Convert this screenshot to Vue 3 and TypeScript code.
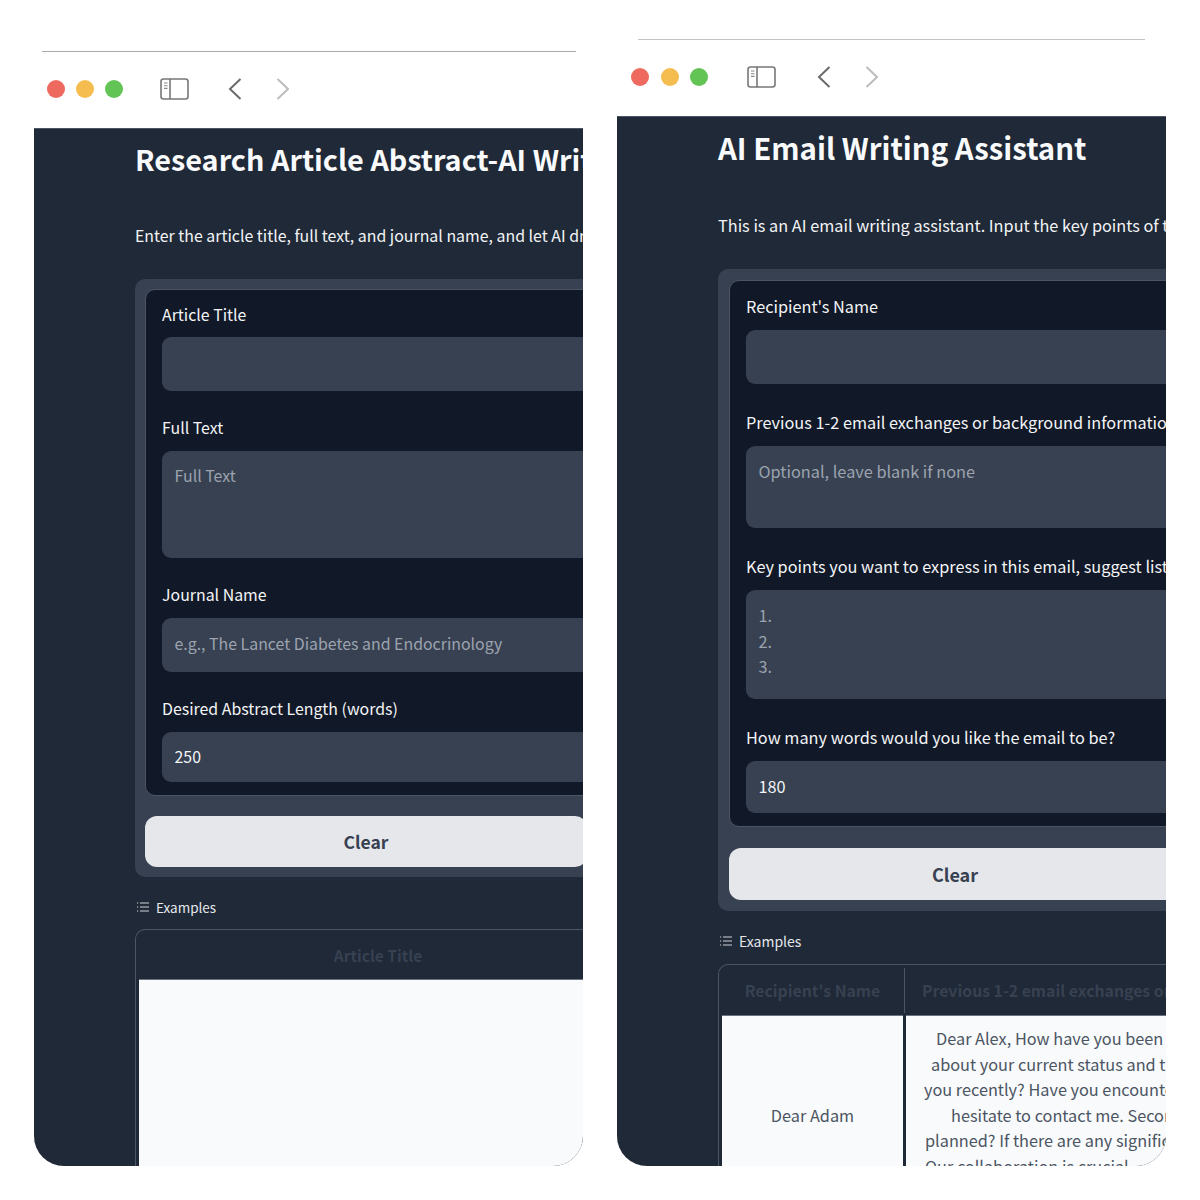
<script setup lang="ts">
interface Field {
  label: string;
  value?: string;
  placeholder?: string;
  multiline?: boolean;
  size: string;
}

interface Line {
  text: string;
  indent: number;
}

const articleFields: Field[] = [
  { label: "Article Title", size: "h-54" },
  { label: "Full Text", placeholder: "Full Text", multiline: true, size: "h-107" },
  { label: "Journal Name", placeholder: "e.g., The Lancet Diabetes and Endocrinology", size: "h-54" },
  { label: "Desired Abstract Length (words)", value: "250", size: "h-50" },
];

const emailFields: Field[] = [
  { label: "Recipient's Name", size: "h-54" },
  {
    label: "Previous 1-2 email exchanges or background information",
    placeholder: "Optional, leave blank if none",
    multiline: true,
    size: "h-82",
  },
  {
    label: "Key points you want to express in this email, suggest listing them",
    placeholder: "1.\n2.\n3.",
    multiline: true,
    size: "h-109",
  },
  { label: "How many words would you like the email to be?", value: "180", size: "h-52" },
];

const emailLines: Line[] = [
  { text: "Dear Alex, How have you been recently?", indent: 30 },
  { text: "about your current status and the project", indent: 25 },
  { text: "you recently? Have you encountered any", indent: 18 },
  { text: "hesitate to contact me. Secondly, what", indent: 45 },
  { text: "planned? If there are any significant", indent: 19 },
  { text: "Our collaboration is crucial", indent: 19 },
];
</script>

<template>
  <div class="page">
    <section class="window window-a">
      <div class="chrome">
        <div class="rule"></div>
        <div class="controls">
          <span class="dot red"></span>
          <span class="dot amber"></span>
          <span class="dot green"></span>
          <svg class="sidebar-icon" viewBox="0 0 29 22" fill="none">
            <rect x="1" y="1" width="27" height="20" rx="2.5" stroke="#777" stroke-width="1.6" />
            <path d="M10 1v20" stroke="#777" stroke-width="1.6" />
            <path d="M4 5h3.5M4 7.7h3.5M4 10.4h3.5" stroke="#888" stroke-width="1.1" />
          </svg>
          <svg class="chevron" viewBox="0 0 14 22" fill="none">
            <path d="M12.5 1 2 11l10.5 10" stroke="#6b6b6b" stroke-width="2" />
          </svg>
          <svg class="chevron next" viewBox="0 0 14 22" fill="none">
            <path d="m2.5 1 10.5 10-10.5 10" stroke="#bdbdbd" stroke-width="2" />
          </svg>
        </div>
      </div>
      <div class="screen">
        <h1>Research Article Abstract-AI Writer</h1>
        <p class="intro">Enter the article title, full text, and journal name, and let AI draft the abstract for you.</p>
        <div class="panel">
          <div class="form-box">
            <div v-for="field in articleFields" :key="field.label" class="field">
              <label>{{ field.label }}</label>
              <textarea v-if="field.multiline" :class="field.size" :placeholder="field.placeholder"></textarea>
              <input v-else :class="field.size" type="text" :value="field.value" :placeholder="field.placeholder" />
            </div>
          </div>
          <button type="button" class="clear">Clear</button>
        </div>
        <div class="examples-label">
          <svg viewBox="0 0 12 12" fill="none" stroke="#e5e7eb" stroke-width="0.9">
            <path d="M3 2h9M3 6h9M3 10h9" />
            <path d="M0 2h1.2M0 6h1.2M0 10h1.2" />
          </svg>
          <span>Examples</span>
        </div>
        <div class="table">
          <div class="col col-wide">
            <div class="th">Article Title</div>
            <div class="td"></div>
          </div>
        </div>
      </div>
    </section>

    <section class="window window-b">
      <div class="chrome">
        <div class="rule"></div>
        <div class="controls">
          <span class="dot red"></span>
          <span class="dot amber"></span>
          <span class="dot green"></span>
          <svg class="sidebar-icon" viewBox="0 0 29 22" fill="none">
            <rect x="1" y="1" width="27" height="20" rx="2.5" stroke="#777" stroke-width="1.6" />
            <path d="M10 1v20" stroke="#777" stroke-width="1.6" />
            <path d="M4 5h3.5M4 7.7h3.5M4 10.4h3.5" stroke="#888" stroke-width="1.1" />
          </svg>
          <svg class="chevron" viewBox="0 0 14 22" fill="none">
            <path d="M12.5 1 2 11l10.5 10" stroke="#6b6b6b" stroke-width="2" />
          </svg>
          <svg class="chevron next" viewBox="0 0 14 22" fill="none">
            <path d="m2.5 1 10.5 10-10.5 10" stroke="#bdbdbd" stroke-width="2" />
          </svg>
        </div>
      </div>
      <div class="screen">
        <h1>AI Email Writing Assistant</h1>
        <p class="intro">This is an AI email writing assistant. Input the key points of the email and let AI write it.</p>
        <div class="panel">
          <div class="form-box">
            <div v-for="field in emailFields" :key="field.label" class="field">
              <label>{{ field.label }}</label>
              <textarea v-if="field.multiline" :class="field.size" :placeholder="field.placeholder"></textarea>
              <input v-else :class="field.size" type="text" :value="field.value" :placeholder="field.placeholder" />
            </div>
          </div>
          <button type="button" class="clear">Clear</button>
        </div>
        <div class="examples-label">
          <svg viewBox="0 0 12 12" fill="none" stroke="#e5e7eb" stroke-width="0.9">
            <path d="M3 2h9M3 6h9M3 10h9" />
            <path d="M0 2h1.2M0 6h1.2M0 10h1.2" />
          </svg>
          <span>Examples</span>
        </div>
        <div class="table">
          <div class="col col-name">
            <div class="th">Recipient's Name</div>
            <div class="td td-center">Dear Adam</div>
          </div>
          <div class="col col-prev">
            <div class="th th-left">Previous 1-2 email exchanges or background</div>
            <div class="td td-lines">
              <div v-for="line in emailLines" :key="line.text" :style="{ paddingLeft: line.indent + 'px' }">
                {{ line.text }}
              </div>
            </div>
          </div>
        </div>
      </div>
    </section>
  </div>
</template>

<style>
html,
body {
  background: #fff;
}
</style>

<style scoped>
.page {
  display: flex;
  gap: 34px;
  width: 1200px;
  height: 1166px;
  padding-left: 34px;
  box-sizing: border-box;
  overflow: hidden;
  font-family: "Noto Sans CJK SC", "Source Sans Pro", sans-serif;
}

.window {
  display: flex;
  flex-direction: column;
  width: 549px;
  height: 1166px;
  flex: none;
  font-size: 15.9px;
}

.window-b {
  font-size: 16.3px;
}

.chrome {
  flex: none;
  display: flex;
  flex-direction: column;
  box-sizing: border-box;
}

.rule {
  height: 1px;
}

.window-a .chrome {
  height: 128px;
  padding-top: 51px;
}

.window-a .rule {
  margin: 0 7px 0 8px;
  background: #aaa;
}

.window-b .chrome {
  height: 116px;
  padding-top: 39px;
}

.window-b .rule {
  margin: 0 21px;
  background: #c4c4c4;
}

.controls {
  display: flex;
  align-items: center;
  height: 74px;
  padding-left: 12.5px;
}

.window-b .controls {
  padding-left: 14px;
}

.dot {
  width: 18px;
  height: 18px;
  border-radius: 50%;
  margin-right: 11px;
  flex: none;
}

.window-b .dot {
  margin-right: 11.5px;
}

.red {
  background: #ee6a5f;
}

.amber {
  background: #f5bd4f;
}

.green {
  background: #61c454;
}

.sidebar-icon {
  width: 29px;
  height: 22px;
  margin-left: 26px;
  flex: none;
}

.window-b .sidebar-icon {
  margin-left: 27px;
}

.chevron {
  width: 14px;
  height: 22px;
  margin-left: 39px;
  flex: none;
}

.window-b .chevron {
  margin-left: 41px;
}

.chevron.next,
.window-b .chevron.next {
  margin-left: 33px;
}

.screen {
  flex: 1;
  min-height: 0;
  overflow: hidden;
  background: #1f2937;
  border-radius: 0 0 30px 30px;
  padding-left: 101px;
  box-shadow: inset 0 1px 0 #4b5563;
}

.window-a .screen > * {
  width: 462px;
}

.window-b .screen > * {
  width: 474px;
}

h1 {
  margin: 0;
  color: #f9fafb;
  font-size: 28.8px;
  font-weight: 600;
  line-height: 38px;
  white-space: nowrap;
  padding-top: 12px;
}

.window-b h1 {
  font-size: 29.4px;
}

.intro {
  margin: 0;
  color: #f3f4f6;
  font-size: 15.9px;
  line-height: 24px;
  white-space: nowrap;
  padding-top: 46px;
}

.window-b .intro {
  font-size: 16.3px;
  padding-top: 47px;
}

.panel {
  margin-top: 31px;
  padding: 10px;
  background: #374151;
  border-radius: 10px;
  box-sizing: border-box;
}

.window-b .panel {
  margin-top: 32px;
  padding: 11px;
}

.form-box {
  display: flex;
  flex-direction: column;
  gap: 26px;
  width: 560px;
  padding: 14px 16px 13px;
  background: #111827;
  border: 1px solid #4b5563;
  border-radius: 10px;
  box-sizing: border-box;
}

.window-b .form-box {
  gap: 27px;
  padding: 14px 16px 13px;
}

.field {
  display: flex;
  flex-direction: column;
  gap: 12px;
}

.window-a .field:first-child {
  gap: 11px;
}

.window-b .field {
  gap: 13px;
}

label {
  color: #f3f4f6;
  line-height: 22px;
  white-space: nowrap;
}

input,
textarea {
  display: block;
  width: 100%;
  border: none;
  border-radius: 9px;
  background: #374151;
  color: #f3f4f6;
  font: inherit;
  line-height: 25.5px;
  box-sizing: border-box;
  resize: none;
  outline: none;
}

input {
  padding: 0 13px 2px 12.5px;
}

textarea {
  padding: 12px 13px 12px 12.5px;
}

.window-b textarea {
  padding-top: 13px;
}

input::placeholder,
textarea::placeholder {
  color: #9ca3af;
  opacity: 1;
}

.h-50 {
  height: 50px;
}

.h-52 {
  height: 52px;
}

.h-54 {
  height: 54px;
  padding-bottom: 4px;
}

.h-82 {
  height: 82px;
}

.h-107 {
  height: 107px;
}

.h-109 {
  height: 109px;
}

.clear {
  display: block;
  width: 100%;
  height: 51px;
  margin-top: 20px;
  padding: 0;
  border: none;
  border-radius: 12px;
  background: #e5e7eb;
  color: #374151;
  font: inherit;
  font-size: 17.5px;
  font-weight: 600;
}

.window-b .clear {
  height: 52px;
  margin-top: 21px;
  font-size: 18px;
}

.examples-label {
  display: flex;
  align-items: center;
  gap: 7px;
  margin-top: 21px;
  padding-left: 2px;
  height: 18px;
  color: #e5e7eb;
  font-size: 13.5px;
  line-height: 18px;
}

.window-b .examples-label {
  font-size: 14px;
}

.examples-label svg {
  width: 12px;
  height: 12px;
  flex: none;
}

.table {
  display: flex;
  gap: 3px;
  margin-top: 13px;
  padding: 0 3px;
  height: 400px;
  border: 1px solid #4b5563;
  border-bottom: none;
  border-radius: 10px 10px 0 0;
  box-sizing: border-box;
}

.window-b .table {
  margin-top: 14px;
}

.window-a .screen > .table {
  width: 486px;
}

.window-b .screen > .table {
  width: 800px;
}

.col {
  flex: none;
  display: flex;
  flex-direction: column;
}

.col-wide {
  flex: 1;
}

.col-name {
  width: 181px;
}

.col-prev {
  width: 600px;
}

.th {
  height: 49px;
  display: flex;
  align-items: center;
  justify-content: center;
  color: #374151;
  font-size: 15.5px;
  font-weight: 600;
  white-space: nowrap;
  border-bottom: 1px solid #6b7280;
  flex: none;
}

.window-b .th {
  height: 51px;
  font-size: 15.8px;
  box-sizing: border-box;
}

.th-left {
  justify-content: flex-start;
  padding-left: 16px;
}

.col-prev .th {
  position: relative;
}

.col-prev .th::before {
  content: "";
  position: absolute;
  left: -2px;
  top: 3px;
  bottom: 2px;
  width: 1px;
  background: #4b5563;
}

.td {
  flex: 1;
  background: #f9fafb;
  color: #4b5563;
  line-height: 25.5px;
}

.td-center {
  flex: none;
  height: 200px;
  display: flex;
  align-items: center;
  justify-content: center;
}

.td-lines {
  padding-top: 10px;
  white-space: nowrap;
}
</style>
